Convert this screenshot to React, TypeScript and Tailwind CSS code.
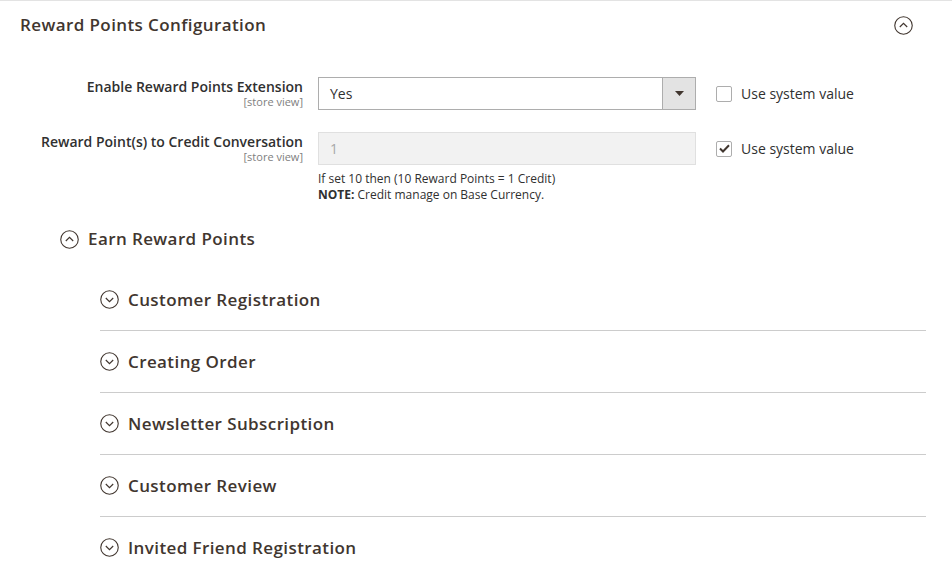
const subSections = [
  "Customer Registration",
  "Creating Order",
  "Newsletter Subscription",
  "Customer Review",
  "Invited Friend Registration",
];

function CircleChevron({ up = false }: { up?: boolean }) {
  return (
    <svg width="19" height="19" viewBox="0 0 19 19" fill="none" className="shrink-0">
      <circle cx="9.5" cy="9.5" r="8.75" stroke="#41362f" strokeWidth="1.1" />
      {up ? (
        <path d="M5.8 11 L9.5 7.4 L13.2 11" stroke="#41362f" strokeWidth="1.2" />
      ) : (
        <path d="M5.8 8 L9.5 11.6 L13.2 8" stroke="#41362f" strokeWidth="1.2" />
      )}
    </svg>
  );
}

function Checkbox({ checked }: { checked?: boolean }) {
  return (
    <span className="w-4 h-4 rounded-[2px] border border-[#adadad] bg-white flex items-center justify-center">
      {checked && (
        <svg width="11" height="9" viewBox="0 0 11 9" fill="none">
          <path d="M1 4.5 L4 7.5 L10 1.3" stroke="#41362f" strokeWidth="2" />
        </svg>
      )}
    </span>
  );
}

export default function App() {
  return (
    <div className="min-h-screen bg-white font-['Open_Sans',sans-serif] text-[#303030] border-t border-[#e3e3e3]">
      {/* Section header */}
      <div className="h-[48px] flex items-center justify-between pl-5 pr-[39px]">
        <h2 className="text-[17px] font-semibold tracking-[0.4px] text-[#41362f]">Reward Points Configuration</h2>
        <CircleChevron up />
      </div>

      {/* Fields */}
      <div className="mt-[28px] flex flex-col gap-[22px]">
        <div className="flex">
          <div className="w-[303px] text-right pt-[1px]">
            <div className="text-[14px] leading-[18px] font-semibold">Enable Reward Points Extension</div>
            <div className="text-[11px] leading-[12px] text-[#808080]">[store view]</div>
          </div>
          <div className="ml-[15px] w-[378px] h-[33px] border border-[#adadad] flex">
            <div className="flex-1 flex items-center pl-[11px] text-[14px]">Yes</div>
            <div className="w-[33px] bg-[#e3e3e3] border-l border-[#adadad] flex items-center justify-center">
              <svg width="9" height="5" viewBox="0 0 9 5">
                <path d="M0 0 H9 L4.5 5 Z" fill="#41362f" />
              </svg>
            </div>
          </div>
          <label className="ml-5 h-[33px] flex items-center gap-[9px] text-[14px]">
            <Checkbox />
            Use system value
          </label>
        </div>

        <div className="flex">
          <div className="w-[303px] text-right pt-[1px]">
            <div className="text-[14px] leading-[18px] font-semibold">Reward Point(s) to Credit Conversation</div>
            <div className="text-[11px] leading-[12px] text-[#808080]">[store view]</div>
          </div>
          <div className="ml-[15px] w-[378px]">
            <div className="h-[33px] border border-[#e0e0e0] bg-[#f2f2f2] flex items-center pl-[11px] text-[14px] text-[#a8a8a8]">
              1
            </div>
            <div className="mt-[6px] text-[12px] leading-[16px]">
              <div>If set 10 then (10 Reward Points = 1 Credit)</div>
              <div>
                <span className="font-bold">NOTE:</span> Credit manage on Base Currency.
              </div>
            </div>
          </div>
          <label className="ml-5 h-[33px] flex items-center gap-[9px] text-[14px]">
            <Checkbox checked />
            Use system value
          </label>
        </div>
      </div>

      {/* Earn Reward Points group */}
      <div className="mt-[19px] h-[34px] pl-[60px] flex items-center gap-[9px]">
        <CircleChevron up />
        <span className="text-[17px] font-semibold tracking-[0.4px] text-[#41362f]">Earn Reward Points</span>
      </div>

      <div className="mt-[13px] ml-[100px] mr-[26px]">
        {subSections.map((name, i) => (
          <div
            key={name}
            className={`flex items-center gap-[9px] ${i < subSections.length - 1 ? "h-[62px] border-b border-[#cccccc]" : "h-[61px]"}`}
          >
            <CircleChevron />
            <span className="text-[17px] font-semibold tracking-[0.4px] text-[#41362f]">{name}</span>
          </div>
        ))}
      </div>
    </div>
  );
}
